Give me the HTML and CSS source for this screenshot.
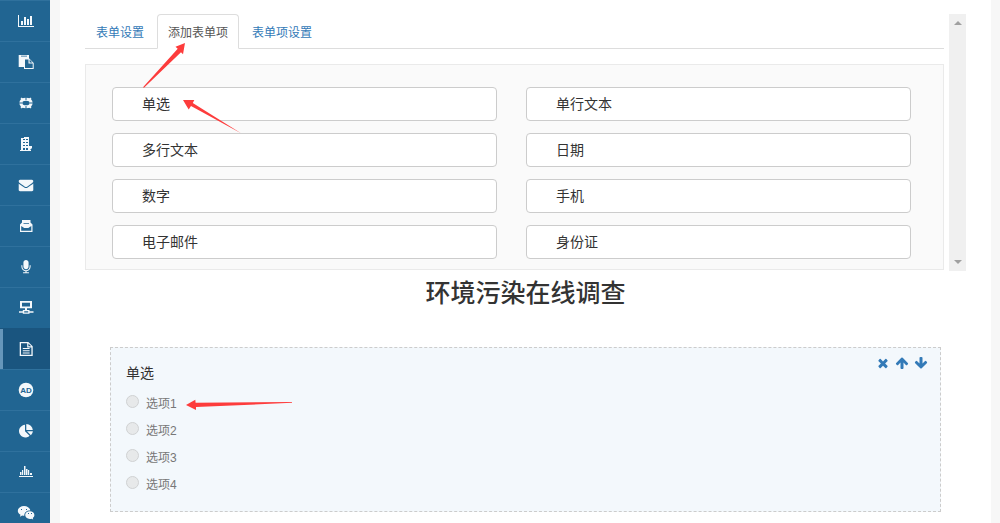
FILE: index.html
```
<!DOCTYPE html>
<html lang="zh-CN">

<head>
    <meta charset="UTF-8">
    <title>环境污染在线调查</title>
    <link rel="stylesheet" href="styles.css">
</head>

<body>

    <div class="page">
        <nav class="sidebar">
            <a href="#" aria-label="统计">
                <svg viewBox="0 0 18 18"><path d="M1 3h1v11h15v1H1zM4 9h2v4H4zM7 5h2v8H7zM10 7h2v6h-2zM13 4h2v9h-2z"/></svg>
            </a>
            <a href="#" aria-label="复制">
                <svg viewBox="0 0 18 18"><path d="M1.700 2h10.300v3.300l4.700 4.600V16H7V14H1.700zM4 2.700v.9h6v-.9zM8 6.600v8.400h7.700v-4.500h-4.200V6.600zM12.600 6.400v3.200h2.800z" fill-rule="evenodd"/></svg>
            </a>
            <a href="#" aria-label="帮助">
                <svg viewBox="0 0 18 18">
                    <ellipse cx="9" cy="9" rx="5.200" ry="3.800" fill="none" stroke="#f4f8fb" stroke-width="3"/>
                    <path d="M9 3v3M9 12v3M2 9h3M13 9h3.500" stroke="#216592" stroke-width="1"/>
                    <path d="M4 4.200l2.500 2M14 4.200l-2.500 2M4 13.800l2.500-2M14 13.800l-2.500-2" stroke="#f4f8fb" stroke-width="2"/>
                </svg>
            </a>
            <a href="#" aria-label="单位">
                <svg viewBox="0 0 18 18"><path d="M4 3h3V2h5v9h3v2l-2 2h1v1H3v-1h1zM6 4v1h2V4zM9 4v1h2V4zM6 7v1h2V7zM9 7v1h2V7zM6 10v1h2v-1zM9 10v1h2v-1zM6 13v2h2v-2zM9 13v2h2v-2z" fill-rule="evenodd"/></svg>
            </a>
            <a href="#" aria-label="邮件">
                <svg viewBox="-210 -210 2212 2212"><path d="M1792 710v794q0 66-47 113t-113 47h-1472q-66 0-113-47t-47-113v-794q44 49 101 87 362 246 497 345 57 42 92.500 65.500t94.500 48 110 24.500h2q51 0 110-24.500t94.500-48 92.500-65.500q170-123 498-345 57-39 100-87zm0-294q0 79-49 151t-122 123q-376 261-468 325-10 7-42.500 31t-54 38.500-52 32.500-57.500 27-50 9h-2q-23 0-50-9t-57.500-27-52-32.500-54-38.500-42.500-31q-91-64-262-182.500t-205-142.500q-62-42-117-115.500t-55-136.500q0-78 41.500-130t118.500-52h1472q65 0 112.500 47t47.500 113z"/></svg>
            </a>
            <a href="#" aria-label="收件箱">
                <svg viewBox="0 0 18 18"><path d="M5 3h8.500v2.500l2 2V15H3V7.500l2-2zM4.200 9v4.800h10.100V9l-3 2H7.200zM6.500 6.300v.7H12v-.7z" fill-rule="evenodd"/></svg>
            </a>
            <a href="#" aria-label="语音">
                <svg viewBox="-224 -240 2240 2240"><path d="M1472 704v128q0 221-147.500 384.500t-364.500 187.500v132h256q26 0 45 19t19 45-19 45-45 19h-640q-26 0-45-19t-19-45 19-45 45-19h256v-132q-217-24-364.500-187.500t-147.500-384.500v-128q0-26 19-45t45-19 45 19 19 45v128q0 185 131.500 316.500t316.500 131.500 316.500-131.500 131.500-316.500v-128q0-26 19-45t45-19 45 19 19 45zm-256-384v512q0 132-94 226t-226 94-226-94-94-226v-512q0-132 94-226t226-94 226 94 94 226z"/></svg>
            </a>
            <a href="#" aria-label="网络">
                <svg viewBox="0 0 18 18"><path d="M3 2h12v7.300h-5V11h2.500v1.200h4v1.600h-4v1H5.800v-1H2v-1.600h3.800V11H8V9.300H3zM5 3.700v3.800h8V3.700zM7.200 12.300v1.200h4v-1.200z" fill-rule="evenodd"/></svg>
            </a>
            <a href="#" class="active" aria-label="表单">
                <svg viewBox="0 0 18 18"><path d="M2.700 2h8.600l4.400 4.300V16H2.700zM4 3.200v11.600h10.400V7.500H10.200V3.200zM11.400 3.600v2.700h2.800zM5.800 8h6.800v1H5.800zM5.800 10.200h6.800v1H5.800zM5.800 12.400h6.800v1H5.800z" fill-rule="evenodd"/></svg>
            </a>
            <a href="#" aria-label="广告">
                <svg viewBox="0 0 18 18">
                    <circle cx="9" cy="9" r="7.300"/>
                    <text class="ad" x="9" y="12" text-anchor="middle">AD</text>
                </svg>
            </a>
            <a href="#" aria-label="占比">
                <svg viewBox="0 0 18 18"><path d="M8 2.800v6.500l4.600 4.400A6.300 6.300 0 1 1 8 2.800zM9.300 2a6.500 6.500 0 0 1 6.500 6.100H9.300zM10 9.300h5.900a6.300 6.300 0 0 1-2 4z"/></svg>
            </a>
            <a href="#" aria-label="报表">
                <svg viewBox="0 0 18 18"><path d="M2 13h14v1H2zM3 9h1.500v3H3zM5 7h1.200v5H5zM7 3h1.500v9H7zM9 6h1.500v6H9zM11 7h1.200v5H11zM13 10h2v2h-2z"/></svg>
            </a>
            <a href="#" aria-label="微信">
                <svg viewBox="0 0 18 18">
                    <path d="M7 2c3.400 0 6 1.900 6.300 4.400C9.500 6.300 7 8.700 7.300 11.800c-.8 0-1.500-.1-2.100-.3l-2.300 1.200.6-2C1.800 9.700.8 8.400.8 6.900.8 4.200 3.500 2 7 2z"/>
                    <path d="M12.800 7.200c2.600 0 4.600 1.700 4.600 3.900 0 1.200-.6 2.200-1.600 3l.4 1.500-1.700-.9c-3.500.8-6.300-1-6.300-3.600 0-2.200 2-3.900 4.600-3.900z"/>
                    <path d="M4 5h1v1H4zM9 5h1v1H9zM11 9h1v1h-1zM14 9h1v1h-1z" fill="#216592"/>
                </svg>
            </a>
        </nav>

        <main class="content">
            <section class="toolbox">
                <div class="toolbox-body">
                    <ul class="tabs">
                        <li><a href="#">表单设置</a></li>
                        <li class="active"><a href="#">添加表单项</a></li>
                        <li><a href="#">表单项设置</a></li>
                    </ul>
                    <div class="fields">
                        <button type="button">单选</button>
                        <button type="button">单行文本</button>
                        <button type="button">多行文本</button>
                        <button type="button">日期</button>
                        <button type="button">数字</button>
                        <button type="button">手机</button>
                        <button type="button">电子邮件</button>
                        <button type="button">身份证</button>
                    </div>
                </div>
                <div class="scrollbar">
                    <button type="button" aria-label="向上滚动"><svg viewBox="0 0 8 4"><path d="M0 4l4-4 4 4z"/></svg></button>
                    <button type="button" aria-label="向下滚动"><svg viewBox="0 0 8 4"><path d="M0 0l4 4 4-4z"/></svg></button>
                </div>
            </section>

            <h1>环境污染在线调查</h1>

            <fieldset class="question">
                <div class="question-head">
                    <h2>单选</h2>
                    <div class="actions">
                        <button type="button" aria-label="删除">
                            <svg viewBox="0 0 1792 1792"><path d="M1490 1322q0 40-28 68l-136 136q-28 28-68 28t-68-28l-294-294-294 294q-28 28-68 28t-68-28l-136-136q-28-28-28-68t28-68l294-294-294-294q-28-28-28-68t28-68l136-136q28-28 68-28t68 28l294 294 294-294q28-28 68-28t68 28l136 136q28 28 28 68t-28 68l-294 294 294 294q28 28 28 68z"/></svg>
                        </button>
                        <button type="button" aria-label="上移">
                            <svg viewBox="0 0 1792 1792"><path d="M1675 971q0 51-37 90l-75 75q-38 38-91 38-54 0-90-38l-294-293v704q0 52-37.500 84.500t-90.500 32.500h-128q-53 0-90.500-32.500t-37.500-84.500v-704l-294 293q-36 38-90 38t-90-38l-75-75q-38-38-38-90 0-53 38-91l651-651q35-37 90-37 54 0 91 37l651 651q37 39 37 91z"/></svg>
                        </button>
                        <button type="button" aria-label="下移">
                            <svg viewBox="0 0 1792 1792"><path transform="rotate(180 896 896)" d="M1675 971q0 51-37 90l-75 75q-38 38-91 38-54 0-90-38l-294-293v704q0 52-37.500 84.500t-90.500 32.500h-128q-53 0-90.500-32.500t-37.500-84.500v-704l-294 293q-36 38-90 38t-90-38l-75-75q-38-38-38-90 0-53 38-91l651-651q35-37 90-37 54 0 91 37l651 651q37 39 37 91z"/></svg>
                        </button>
                    </div>
                </div>
                <div class="option"><input type="radio" name="q1" id="o1" disabled><label for="o1">选项1</label></div>
                <div class="option"><input type="radio" name="q1" id="o2" disabled><label for="o2">选项2</label></div>
                <div class="option"><input type="radio" name="q1" id="o3" disabled><label for="o3">选项3</label></div>
                <div class="option"><input type="radio" name="q1" id="o4" disabled><label for="o4">选项4</label></div>
            </fieldset>
        </main>

        <!-- guide arrows -->
        <svg class="arrows" viewBox="0 0 300 420">
            <path d="M185 43l-9.500 3.800 2.200 1.900L143 87.200l1 .6L181 52.300l2 2z"/>
            <path d="M183 100h11.300l-1.500 3L241 133.300 191 106l-2.300 3.500z"/>
            <path d="M186 405l9.300-5.300.3 3.100L292 402l0 .8L196 407v3z"/>
        </svg>
    </div>

</body>

</html>
```
FILE: styles.css
```
* {
  box-sizing: border-box;
}

body {
  margin: 0;
  background: #f7f7f7;
  color: #333;
  font-family: "Liberation Sans", "Noto Sans CJK SC", sans-serif;
  font-size: 12px;
  line-height: 20px;
}

button {
  margin: 0;
  padding: 0;
  border: 0;
  background: none;
  color: inherit;
  font-family: inherit;
  cursor: pointer;
}

svg {
  display: block;
}

.page {
  position: relative;
  display: flex;
  height: 100vh;
  overflow: hidden;
}

/* sidebar */
.sidebar {
  flex: none;
  width: 50px;
  background: #216592;
  overflow: hidden;
}

.sidebar a {
  display: flex;
  align-items: center;
  height: 41px;
  padding-left: 17px;
  border-top: 1px solid #2f719d;
}

.sidebar a.active {
  background: #1a557f;
  border-top-color: #1a557f;
  box-shadow: inset 3px 0 #6696ba;
}

.sidebar svg {
  width: 18px;
  height: 18px;
  fill: #f4f8fb;
}

.sidebar .ad {
  fill: #216592;
  font-size: 8px;
  font-weight: bold;
}

.content {
  flex: 1;
  margin: 0 9px 0 10px;
  padding: 14px 25px 0;
  background: #fff;
}

/* form item picker */
.toolbox {
  display: flex;
  gap: 5px;
}

.toolbox-body {
  flex: 1;
}

.tabs {
  display: flex;
  gap: 2px;
  margin: 0 0 15px;
  padding: 0;
  list-style: none;
  border-bottom: 1px solid #ddd;
}

.tabs li {
  margin-bottom: -1px;
}

.tabs a {
  display: block;
  padding: 8px 10px 5px;
  border: 1px solid transparent;
  border-radius: 4px 4px 0 0;
  color: #337ab7;
  text-decoration: none;
}

.tabs .active a {
  border-color: #ddd;
  border-bottom-color: #fff;
  background: #fff;
  color: #555;
}

.fields {
  display: grid;
  grid-template-columns: 1fr 1fr;
  gap: 12px 29px;
  padding: 22px 32px 10px 26px;
  border: 1px solid #eaeaea;
  background: #fafafa;
}

.fields button {
  height: 34px;
  padding: 0 29px 2px;
  border: 1px solid #ccc;
  border-radius: 4px;
  background: #fff;
  font-size: 14px;
  text-align: left;
}

.scrollbar {
  display: flex;
  flex-direction: column;
  justify-content: space-between;
  width: 17px;
  margin-bottom: -1px;
  background: #f0f0f0;
}

.scrollbar button {
  display: flex;
  align-items: center;
  justify-content: center;
  height: 18px;
}

.scrollbar svg {
  width: 8px;
  height: 4px;
  fill: #a0a0a0;
}

h1 {
  margin: 6px 0 35px;
  font-family: "Liberation Serif", "Noto Sans CJK SC", serif;
  font-size: 25px;
  font-weight: 500;
  line-height: 36px;
  text-align: center;
}

/* question preview */
.question {
  margin: 0 25px;
  padding: 15px 12px 12px 15px;
  border: 1px dashed #ccc;
  background: #f3f8fc;
}

.question-head {
  display: flex;
  justify-content: space-between;
  height: 28px;
}

.question h2 {
  margin: 0;
  font-size: 14px;
  font-weight: normal;
  line-height: 20px;
}

.actions {
  display: flex;
  align-items: flex-start;
  gap: 5px;
  margin-top: -7px;
}

.actions svg {
  width: 14px;
  height: 14px;
  fill: #337ab7;
}

.option {
  display: flex;
  gap: 7px;
  height: 27px;
  color: #777;
}

.option input {
  appearance: none;
  width: 13px;
  height: 13px;
  margin: 4px 0 0;
  border: 1px solid #d0d2d3;
  border-radius: 50%;
  background: #e7e9ea;
}

.option label {
  padding-top: 3px;
}

.arrows {
  position: absolute;
  top: 0;
  left: 0;
  width: 300px;
  height: 420px;
  fill: #fd3c3c;
  pointer-events: none;
}
```
